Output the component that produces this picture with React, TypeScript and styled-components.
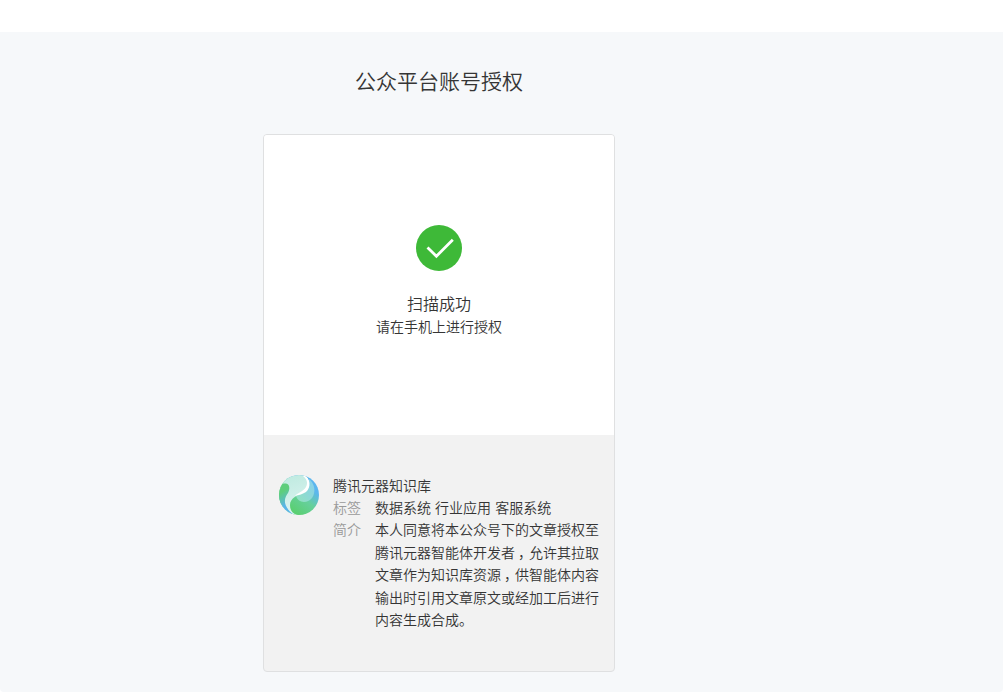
import styled, {createGlobalStyle} from "styled-components";

export const App = () => {
    return (
        <>
            <GlobalStyle/>
            <Page>
                <Content>
                    <Title>公众平台账号授权</Title>
                    <Card>
                        <ScanStatus>
                            <SuccessIcon/>
                            <StatusTitle>扫描成功</StatusTitle>
                            <StatusText>请在手机上进行授权</StatusText>
                        </ScanStatus>
                        <AppInfo>
                            <AppLogo/>
                            <div>
                                <AppName>腾讯元器知识库</AppName>
                                <InfoRow>
                                    <Label>标签</Label>
                                    <Value>数据系统 行业应用 客服系统</Value>
                                </InfoRow>
                                <InfoRow>
                                    <Label>简介</Label>
                                    <Value>
                                        本人同意将本公众号下的文章授权至腾讯元器智能体开发者<Comma>，</Comma>允许其拉取文章作为知识库资源<Comma>，</Comma>供智能体内容输出时引用文章原文或经加工后进行内容生成合成。
                                    </Value>
                                </InfoRow>
                            </div>
                        </AppInfo>
                    </Card>
                </Content>
            </Page>
        </>
    )
}

const SuccessIcon = () => (
    <svg width="46" height="46" viewBox="0 0 46 46">
        <circle cx="23" cy="23" r="23" fill="#3eb938"/>
        <path d="M11.5 22.5 L20.4 31.2 L36.8 14.8" fill="none" stroke="#fff" strokeWidth="2.8"/>
    </svg>
)

const AppLogo = () => (
    <Logo width="40" height="40" viewBox="0 0 40 40">
        <defs>
            <linearGradient id="green" x1="0.1" y1="1" x2="0.9" y2="0">
                <stop offset="0.2" stopColor="#5bcf73"/>
                <stop offset="0.5" stopColor="#66d09c"/>
                <stop offset="0.75" stopColor="#5bb6ee"/>
            </linearGradient>
            <linearGradient id="pale" x1="0" y1="0" x2="0.2" y2="1">
                <stop offset="0" stopColor="#bdeadf"/>
                <stop offset="1" stopColor="#dcf3f1"/>
            </linearGradient>
            <linearGradient id="side" x1="0" y1="0" x2="0.3" y2="1">
                <stop offset="0.3" stopColor="#5ece7c"/>
                <stop offset="0.75" stopColor="#59b4e8"/>
            </linearGradient>
            <linearGradient id="inner" x1="0" y1="1" x2="1" y2="0">
                <stop offset="0" stopColor="#93e2bd"/>
                <stop offset="1" stopColor="#86cff0"/>
            </linearGradient>
            <clipPath id="round">
                <circle cx="20" cy="20" r="20"/>
            </clipPath>
        </defs>
        <g clipPath="url(#round)">
            <rect width="40" height="40" fill="url(#green)"/>
            <path d="M0 0 H26 C31 4 31 13 25 17 C19 20 11 23 11 30 C11 35 13 38 18 40 H8 L2 28 L0 12 Z" fill="url(#pale)"/>
            <path d="M0 14 C1 9 4 8 7 8.5 C11 9 11 14 9 18 C5 23 3 31 15 40 H0 Z" fill="url(#side)"/>
            <path d="M17 21 C25 18 31 13 30 4 C36 9 37 17 33 23 C28 29 19 28 17 21 Z" fill="url(#inner)"/>
            <path d="M25 0.5 C32 3 32 13 27 17 C24 19 20 20 16 21 C18 18 24 17 27 12 C29 8 28 4 24 1 Z" fill="#fff"/>
        </g>
    </Logo>
)

export default App;

const GlobalStyle = createGlobalStyle`
    body {
        margin: 0;
        background-color: #fff;
        color: #353535;
        font-family: "Noto Sans CJK SC", sans-serif;
        font-size: 14px;
        font-weight: 350;
        line-height: 22.4px;
    }

    h1, h2, p {
        margin: 0;
        font-weight: inherit;
    }
`

const Page = styled.main`
    box-sizing: border-box;
    height: 660px;
    margin-top: 32px;
    padding-top: 31px;
    background-color: #f6f8fa;
    border-radius: 0 0 4px 4px;
`

const Content = styled.div`
    display: flex;
    flex-direction: column;
    align-items: center;
    width: 878px;
`

const Title = styled.h1`
    font-size: 21px;
    line-height: 34px;
    margin-bottom: 37px;
`

const Card = styled.section`
    box-sizing: border-box;
    width: 352px;
    height: 538px;
    display: flex;
    flex-direction: column;
    overflow: hidden;
    background-color: #f2f2f2;
    border: 1px solid #dfe0e1;
    border-radius: 4px;
`

const ScanStatus = styled.div`
    box-sizing: border-box;
    height: 300px;
    padding-top: 90px;
    display: flex;
    flex-direction: column;
    align-items: center;
    background-color: #fff;
`

const StatusTitle = styled.h2`
    margin-top: 19px;
    font-size: 16px;
    line-height: 26px;
`

const StatusText = styled.p`
    line-height: 20px;
`

const AppInfo = styled.div`
    display: flex;
    gap: 14px;
    padding: 40px 15px 0;
`

const Logo = styled.svg`
    flex: none;
`

const AppName = styled.p`
    margin-top: -1px;
    line-height: 22px;
`

const InfoRow = styled.div`
    display: flex;
    gap: 14px;
`

const Label = styled.span`
    flex: none;
    color: #9a9a9a;
`

const Value = styled.span`
    width: 224px;
    word-spacing: 1px;
`

const Comma = styled.span`
    padding: 0 4px 0 3px;
    font-feature-settings: "halt";
`
